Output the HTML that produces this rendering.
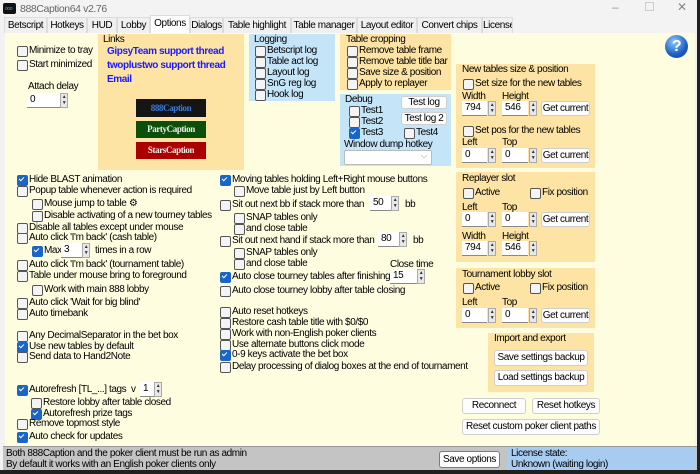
<!DOCTYPE html>
<html><head><meta charset="utf-8"><style>
*{box-sizing:border-box;margin:0;padding:0}
body{width:700px;height:474px;overflow:hidden;background:#202020;font-family:"Liberation Sans",sans-serif;font-size:10px;letter-spacing:-0.4px;color:#000;position:relative}
.a{position:absolute;white-space:nowrap}
.c{position:absolute;white-space:nowrap;line-height:11px;padding-left:12px}
.c:before{content:"";position:absolute;left:0;top:1px;width:9px;height:9px;border:1px solid #555;border-radius:2px;background:#f4f4f4}
.c.k:before{background:#1a66c8;border-color:#1a66c8}
.c.k:after{content:"";position:absolute;left:2px;top:3px;width:4px;height:2px;border-left:1.3px solid #fff;border-bottom:1.3px solid #fff;transform:rotate(-45deg)}
.box{position:absolute;background:#fde4a4}
.blue{background:#c4e4f8}
.in{position:absolute;background:#fff;border-bottom:1px solid #888;height:15px;line-height:14px;padding-left:3px}
.sp{position:absolute;width:8px;height:15px;background:#e8e8e8;border:1px solid #aaa;font-size:5px;line-height:6px;text-align:center;color:#333}
.bt{position:absolute;background:#fdfdfd;border:1px solid #cfcfcf;border-radius:3px;text-align:center;line-height:14px}
.tab{position:absolute;top:17px;height:16px;line-height:15px;background:#f0f0f0;border:1px solid #dcdcdc;border-bottom:none;text-align:center;font-size:10px;overflow:hidden}
</style></head><body>
<div class="a" style="left:0;top:0;width:697px;height:470px;background:#f3f3f3"></div>
<div class="a" style="left:3px;top:3px;width:13px;height:11px;background:#111;border-radius:2px"></div>
<div class="a" style="left:5px;top:6px;color:#49f;font-size:5px">ooo</div>
<div class="a" style="left:20px;top:3px;color:#666;font-size:10.5px">888Caption64 v2.76</div>
<div class="a" style="left:612px;top:0;color:#999;font-size:12px">–</div>
<div class="a" style="left:645px;top:2px;width:9px;height:9px;border:1px solid #ccc"></div>
<div class="a" style="left:677px;top:0;color:#888;font-size:12px">✕</div>
<div class="tab" style="left:4px;width:43px">Betscript</div>
<div class="tab" style="left:47px;width:40px">Hotkeys</div>
<div class="tab" style="left:87px;width:30px">HUD</div>
<div class="tab" style="left:117px;width:33px">Lobby</div>
<div class="tab" style="left:150px;top:15px;height:18px;background:#fff;width:40px">Options</div>
<div class="tab" style="left:190px;width:33px">Dialogs</div>
<div class="tab" style="left:223px;width:68px">Table highlight</div>
<div class="tab" style="left:291px;width:66px">Table manager</div>
<div class="tab" style="left:357px;width:60px">Layout editor</div>
<div class="tab" style="left:417px;width:65px">Convert chips</div>
<div class="tab" style="left:482px;width:31px">License</div>
<div class="a" style="left:5px;top:33px;width:690px;height:413px;background:#fffde0"></div>

<div class="c" style="left:17px;top:45px">Minimize to tray</div>
<div class="c" style="left:17px;top:59px">Start minimized</div>
<div class="a" style="left:28px;top:81px">Attach delay</div>
<div class="in" style="left:27px;top:93px;width:33px">0</div><div class="sp" style="left:60px;top:93px">▲<br>▼</div>

<div class="box" style="left:98px;top:34px;width:146px;height:136px"></div>
<div class="a" style="left:103px;top:34px">Links</div>
<div class="a" style="left:107px;top:46px;color:#1a1aff;font-weight:bold">GipsyTeam support thread</div>
<div class="a" style="left:107px;top:60px;color:#1a1aff;font-weight:bold">twoplustwo support thread</div>
<div class="a" style="left:107px;top:74px;color:#1a1aff;font-weight:bold">Email</div>
<div class="a" style="left:136px;top:99px;width:70px;height:18px;background:#151515;color:#3a7be0;font:bold 9px 'Liberation Serif',serif;text-align:center;line-height:18px">888Caption</div>
<div class="a" style="left:136px;top:121px;width:70px;height:17px;background:#0a500a;color:#eee;font:bold 9px 'Liberation Serif',serif;text-align:center;line-height:17px">PartyCaption</div>
<div class="a" style="left:136px;top:142px;width:70px;height:17px;background:#a00;color:#eee;font:bold 9px 'Liberation Serif',serif;text-align:center;line-height:17px">StarsCaption</div>

<div class="box blue" style="left:249px;top:34px;width:86px;height:67px"></div>
<div class="a" style="left:254px;top:34px">Logging</div>
<div class="c" style="left:255px;top:45px">Betscript log</div>
<div class="c" style="left:255px;top:56px">Table act log</div>
<div class="c" style="left:255px;top:67px">Layout log</div>
<div class="c" style="left:255px;top:78px">SnG reg log</div>
<div class="c" style="left:255px;top:89px">Hook log</div>

<div class="box" style="left:340px;top:34px;width:111px;height:56px"></div>
<div class="a" style="left:346px;top:34px">Table cropping</div>
<div class="c" style="left:347px;top:45px">Remove table frame</div>
<div class="c" style="left:347px;top:56px">Remove table title bar</div>
<div class="c" style="left:347px;top:67px">Save size &amp; position</div>
<div class="c" style="left:347px;top:78px">Apply to replayer</div>

<div class="box blue" style="left:340px;top:94px;width:111px;height:72px"></div>
<div class="a" style="left:345px;top:94px">Debug</div>
<div class="bt" style="left:401px;top:96px;width:46px;height:13px;line-height:11px">Test log</div>
<div class="bt" style="left:401px;top:112px;width:46px;height:13px;line-height:11px">Test log 2</div>
<div class="c" style="left:349px;top:105px">Test1</div>
<div class="c" style="left:349px;top:116px">Test2</div>
<div class="c k" style="left:349px;top:127px">Test3</div>
<div class="c" style="left:404px;top:127px">Test4</div>
<div class="a" style="left:344px;top:139px">Window dump hotkey</div>
<div class="a" style="left:344px;top:150px;width:88px;height:15px;background:#fff;border:1px solid #bbb;border-radius:2px"></div>
<div class="a" style="left:421px;top:151px;color:#888;font-size:8px">⌵</div>

<div class="a" style="left:665px;top:35px;width:23px;height:23px;border-radius:50%;background:radial-gradient(circle at 40% 30%,#8cc8ff,#1a5fc0 60%,#0b3f90);color:#fff;font-weight:bold;font-size:16px;text-align:center;line-height:23px">?</div>

<div class="box" style="left:456px;top:64px;width:139px;height:104px"></div>
<div class="a" style="left:462px;top:64px">New tables size &amp; position</div>
<div class="c" style="left:463px;top:78px">Set size for the new tables</div>
<div class="a" style="left:462px;top:91px">Width</div><div class="a" style="left:502px;top:91px">Height</div>
<div class="in" style="left:462px;top:101px;width:25px">794</div><div class="sp" style="left:488px;top:101px">▲<br>▼</div>
<div class="in" style="left:502px;top:101px;width:26px">546</div><div class="sp" style="left:529px;top:101px">▲<br>▼</div>
<div class="bt" style="left:541px;top:101px;width:49px;height:15px">Get current</div>
<div class="c" style="left:463px;top:125px">Set pos for the new tables</div>
<div class="a" style="left:462px;top:137px">Left</div><div class="a" style="left:502px;top:137px">Top</div>
<div class="in" style="left:462px;top:148px;width:25px">0</div><div class="sp" style="left:488px;top:148px">▲<br>▼</div>
<div class="in" style="left:502px;top:148px;width:26px">0</div><div class="sp" style="left:529px;top:148px">▲<br>▼</div>
<div class="bt" style="left:541px;top:148px;width:49px;height:15px">Get current</div>

<div class="box" style="left:456px;top:172px;width:139px;height:90px"></div>
<div class="a" style="left:462px;top:173px">Replayer slot</div>
<div class="c" style="left:463px;top:187px">Active</div>
<div class="c" style="left:530px;top:187px">Fix position</div>
<div class="a" style="left:462px;top:202px">Left</div><div class="a" style="left:502px;top:202px">Top</div>
<div class="in" style="left:462px;top:212px;width:25px">0</div><div class="sp" style="left:488px;top:212px">▲<br>▼</div>
<div class="in" style="left:502px;top:212px;width:26px">0</div><div class="sp" style="left:529px;top:212px">▲<br>▼</div>
<div class="bt" style="left:541px;top:212px;width:49px;height:15px">Get current</div>
<div class="a" style="left:462px;top:231px">Width</div><div class="a" style="left:502px;top:231px">Height</div>
<div class="in" style="left:462px;top:241px;width:25px">794</div><div class="sp" style="left:488px;top:241px">▲<br>▼</div>
<div class="in" style="left:502px;top:241px;width:26px">546</div><div class="sp" style="left:529px;top:241px">▲<br>▼</div>

<div class="box" style="left:456px;top:268px;width:139px;height:60px"></div>
<div class="a" style="left:462px;top:269px">Tournament lobby slot</div>
<div class="c" style="left:463px;top:282px">Active</div>
<div class="c" style="left:530px;top:282px">Fix position</div>
<div class="a" style="left:462px;top:297px">Left</div><div class="a" style="left:502px;top:297px">Top</div>
<div class="in" style="left:462px;top:308px;width:25px">0</div><div class="sp" style="left:488px;top:308px">▲<br>▼</div>
<div class="in" style="left:502px;top:308px;width:26px">0</div><div class="sp" style="left:529px;top:308px">▲<br>▼</div>
<div class="bt" style="left:541px;top:308px;width:49px;height:15px">Get current</div>

<div class="box" style="left:488px;top:333px;width:106px;height:59px"></div>
<div class="a" style="left:494px;top:333px">Import and export</div>
<div class="bt" style="left:494px;top:350px;width:94px;height:16px">Save settings backup</div>
<div class="bt" style="left:494px;top:370px;width:94px;height:16px">Load settings backup</div>
<div class="bt" style="left:462px;top:398px;width:64px;height:16px">Reconnect</div>
<div class="bt" style="left:532px;top:398px;width:68px;height:16px">Reset hotkeys</div>
<div class="bt" style="left:462px;top:419px;width:138px;height:16px">Reset custom poker client paths</div>

<div class="c k" style="left:17px;top:174px">Hide BLAST animation</div>
<div class="c" style="left:17px;top:185px">Popup table whenever action is required</div>
<div class="c" style="left:32px;top:198px">Mouse jump to table ⚙</div>
<div class="c" style="left:32px;top:210px">Disable activating of a new tourney tables</div>
<div class="c" style="left:17px;top:222px">Disable all tables except under mouse</div>
<div class="c" style="left:17px;top:232px">Auto click 'I'm back' (cash table)</div>
<div class="c k" style="left:32px;top:245px">Max</div>
<div class="in" style="left:61px;top:243px;width:21px">3</div><div class="sp" style="left:82px;top:243px">▲<br>▼</div>
<div class="a" style="left:95px;top:245px">times in a row</div>
<div class="c" style="left:17px;top:259px">Auto click 'I'm back' (tournament table)</div>
<div class="c" style="left:17px;top:270px">Table under mouse bring to foreground</div>
<div class="c" style="left:32px;top:284px">Work with main 888 lobby</div>
<div class="c" style="left:17px;top:297px">Auto click 'Wait for big blind'</div>
<div class="c" style="left:17px;top:308px">Auto timebank</div>
<div class="c" style="left:17px;top:330px">Any DecimalSeparator in the bet box</div>
<div class="c k" style="left:17px;top:341px">Use new tables by default</div>
<div class="c" style="left:17px;top:351px">Send data to Hand2Note</div>
<div class="c k" style="left:17px;top:384px">Autorefresh [TL_...] tags &nbsp;v</div>
<div class="in" style="left:140px;top:382px;width:14px">1</div><div class="sp" style="left:154px;top:382px">▲<br>▼</div>
<div class="c" style="left:31px;top:397px">Restore lobby after table closed</div>
<div class="c k" style="left:31px;top:408px">Autorefresh prize tags</div>
<div class="c" style="left:17px;top:418px">Remove topmost style</div>
<div class="c k" style="left:17px;top:431px">Auto check for updates</div>

<div class="c k" style="left:220px;top:174px">Moving tables holding Left+Right mouse buttons</div>
<div class="c" style="left:234px;top:185px">Move table just by Left button</div>
<div class="c" style="left:220px;top:199px">Sit out next bb if stack more than</div>
<div class="in" style="left:370px;top:196px;width:21px">50</div><div class="sp" style="left:391px;top:196px">▲<br>▼</div>
<div class="a" style="left:405px;top:199px">bb</div>
<div class="c" style="left:234px;top:212px">SNAP tables only</div>
<div class="c" style="left:234px;top:223px">and close table</div>
<div class="c" style="left:220px;top:235px">Sit out next hand if stack more than</div>
<div class="in" style="left:378px;top:232px;width:21px">80</div><div class="sp" style="left:399px;top:232px">▲<br>▼</div>
<div class="a" style="left:413px;top:235px">bb</div>
<div class="c" style="left:234px;top:247px">SNAP tables only</div>
<div class="c" style="left:234px;top:258px">and close table</div>
<div class="a" style="left:390px;top:259px">Close time</div>
<div class="c k" style="left:220px;top:271px">Auto close tourney tables after finishing</div>
<div class="in" style="left:390px;top:269px;width:27px">15</div><div class="sp" style="left:417px;top:269px">▲<br>▼</div>
<div class="c" style="left:220px;top:285px">Auto close tourney lobby after table closing</div>
<div class="c" style="left:220px;top:306px">Auto reset hotkeys</div>
<div class="c" style="left:220px;top:317px">Restore cash table title with $0/$0</div>
<div class="c" style="left:220px;top:328px">Work with non-English poker clients</div>
<div class="c" style="left:220px;top:339px">Use alternate buttons click mode</div>
<div class="c k" style="left:220px;top:349px">0-9 keys activate the bet box</div>
<div class="c" style="left:220px;top:361px">Delay processing of dialog boxes at the end of tournament</div>

<div class="a" style="left:3px;top:446px;width:694px;height:24px;background:#c4c4c4;border-top:1px solid #999"></div>
<div class="a" style="left:6px;top:448px;line-height:11px">Both 888Caption and the poker client must be run as admin<br>By default it works with an English poker clients only</div>
<div class="bt" style="left:439px;top:451px;width:61px;height:17px;border-color:#4a86d0;line-height:15px">Save options</div>
<div class="a" style="left:507px;top:447px;width:188px;height:23px;background:#a8ccf0;padding:1px 4px;line-height:11px">License state:<br>Unknown (waiting login)</div>
</body></html>
